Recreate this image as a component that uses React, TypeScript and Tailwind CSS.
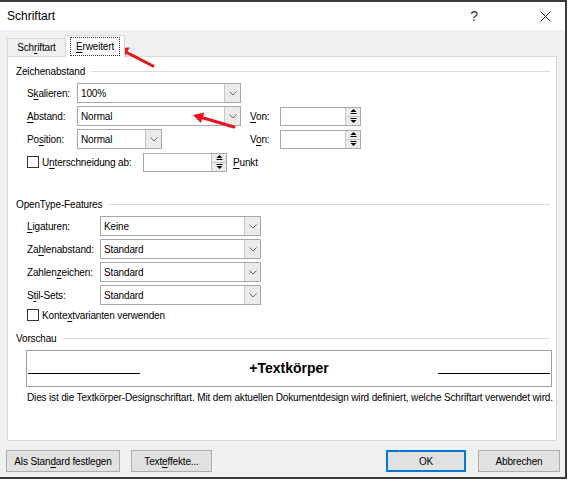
import type { ReactNode } from 'react';

// "&" marks the mnemonic letter, as in Win32 resource strings
function Mn({ t }: { t: string }) {
  const i = t.indexOf('&');
  if (i < 0) return <>{t}</>;
  return (
    <>
      {t.slice(0, i)}
      <span className="underline underline-offset-[2px]">{t[i + 1]}</span>
      {t.slice(i + 2)}
    </>
  );
}

function Chevron() {
  return (
    <svg width="8" height="5" viewBox="0 0 8 5">
      <polyline points="0.5,0.5 4,4 7.5,0.5" fill="none" stroke="#6d6d6d" strokeWidth="1" />
    </svg>
  );
}

function Combo({ w, value }: { w: string; value: string }) {
  return (
    <div className={`${w} h-[20px] flex border border-[#a8a8a8] bg-white`}>
      <div className="flex-1 flex items-center pl-[3px]">{value}</div>
      <div className="w-[16px] flex items-center justify-center bg-[#ebebeb] border-l border-[#c6c6c6]">
        <Chevron />
      </div>
    </div>
  );
}

function Spin({ w }: { w: string }) {
  return (
    <div className={`${w} h-[19px] flex border border-[#a8a8a8] bg-white`}>
      <div className="flex-1" />
      <div className="w-[15px] flex flex-col border-l border-[#c6c6c6] bg-[#ececec]">
        <div className="flex-1 flex items-center justify-center border-b border-[#c6c6c6]">
          <svg width="7" height="5" viewBox="0 0 7 5">
            <polygon points="3.5,0 6.5,3 0.5,3" fill="#000" />
            <rect x="0.5" y="4" width="6" height="1" fill="#000" />
          </svg>
        </div>
        <div className="flex-1 flex items-center justify-center">
          <svg width="7" height="5" viewBox="0 0 7 5">
            <rect x="0.5" y="0" width="6" height="1" fill="#000" />
            <polygon points="0.5,2 6.5,2 3.5,5" fill="#000" />
          </svg>
        </div>
      </div>
    </div>
  );
}

function Check() {
  return <div className="w-[12px] h-[12px] border border-[#333] bg-white shrink-0" />;
}

function Group({ title }: { title: string }) {
  return (
    <div className="h-[14px] flex items-center ml-[8px] mr-[6px]">
      <span>{title}</span>
      <div className="flex-1 h-px bg-[#dcdcdc] ml-[6px]" />
    </div>
  );
}

function Btn({ children, w, primary }: { children: ReactNode; w: string; primary?: boolean }) {
  return (
    <div
      className={`${w} h-[22px] flex items-center justify-center bg-[#e1e1e1] border ${
        primary ? 'border-[#0078d7] shadow-[inset_0_0_0_1px_#0078d7]' : 'border-[#adadad]'
      }`}
    >
      {children}
    </div>
  );
}

export default function App() {
  return (
    <div className="w-[569px] h-[480px] bg-white relative text-[10px] tracking-[-0.15px] whitespace-nowrap text-black font-['Liberation_Sans',sans-serif] overflow-hidden">
      <div className="w-[567px] h-[479px] flex flex-col border-t-2 border-r-2 border-b-2 border-[#3c3c3c] bg-[#f0f0f0]">
        {/* title bar */}
        <div className="h-[28px] bg-white flex items-center shrink-0">
          <span className="ml-[7px] text-[12px] tracking-normal">Schriftart</span>
          <span className="ml-auto text-[14px] text-[#333] mr-[62px]">?</span>
          <svg width="11" height="11" viewBox="0 0 11 11" className="mr-[14px]">
            <path d="M0.5 0.5 L10.5 10.5 M10.5 0.5 L0.5 10.5" stroke="#222" strokeWidth="1" />
          </svg>
        </div>

        {/* tabs */}
        <div className="flex items-end h-[21px] mt-[5px] ml-[7px]">
          <div className="w-[58px] h-[18px] flex items-center justify-center border-t border-l border-[#d9d9d9]">
            <Mn t="Sch&riftart" />
          </div>
          <div className="relative z-10 -mb-px w-[60px] h-[22px] flex items-center justify-center bg-white border-t border-l border-r border-[#d9d9d9]">
            <span className="px-[5px] py-[1px] border border-dotted border-[#333]">
              <Mn t="&Erweitert" />
            </span>
          </div>
        </div>

        {/* panel */}
        <div className="ml-[7px] w-[550px] h-[385px] bg-white border border-[#d9d9d9] flex flex-col pt-[7px]">
          <Group title="Zeichenabstand" />

          <div className="mt-[5px] flex flex-col gap-[3px] ml-[19px]">
            <div className="h-[20px] flex items-center">
              <span className="w-[50px]"><Mn t="S&kalieren:" /></span>
              <Combo w="w-[164px]" value="100%" />
            </div>
            <div className="h-[20px] flex items-center">
              <span className="w-[50px]"><Mn t="&Abstand:" /></span>
              <Combo w="w-[164px]" value="Normal" />
              <span className="ml-[9px] w-[30px]"><Mn t="&Von:" /></span>
              <Spin w="w-[81px]" />
            </div>
            <div className="h-[20px] flex items-center">
              <span className="w-[50px]"><Mn t="Po&sition:" /></span>
              <div className="w-[164px]">
                <Combo w="w-[85px]" value="Normal" />
              </div>
              <span className="ml-[9px] w-[30px]"><Mn t="V&on:" /></span>
              <Spin w="w-[81px]" />
            </div>
            <div className="h-[20px] flex items-center">
              <Check />
              <span className="ml-[3px] w-[101px]"><Mn t="U&nterschneidung ab:" /></span>
              <Spin w="w-[84px]" />
              <span className="ml-[6px]"><Mn t="&Punkt" /></span>
            </div>
          </div>

          <div className="mt-[25px]">
            <Group title="OpenType-Features" />
          </div>

          <div className="mt-[5px] flex flex-col gap-[3px] ml-[19px]">
            <div className="h-[20px] flex items-center">
              <span className="w-[73px]"><Mn t="&Ligaturen:" /></span>
              <Combo w="w-[161px]" value="Keine" />
            </div>
            <div className="h-[20px] flex items-center">
              <span className="w-[73px]"><Mn t="Za&hlenabstand:" /></span>
              <Combo w="w-[161px]" value="Standard" />
            </div>
            <div className="h-[20px] flex items-center">
              <span className="w-[73px]"><Mn t="Zahlen&zeichen:" /></span>
              <Combo w="w-[161px]" value="Standard" />
            </div>
            <div className="h-[20px] flex items-center">
              <span className="w-[73px]"><Mn t="S&til-Sets:" /></span>
              <Combo w="w-[161px]" value="Standard" />
            </div>
          </div>

          <div className="mt-[3px] h-[14px] flex items-center ml-[19px]">
            <Check />
            <span className="ml-[3px]"><Mn t="Konte&xtvarianten verwenden" /></span>
          </div>

          <div className="mt-[9px]">
            <Group title="Vorschau" />
          </div>

          <div className="mt-[5px] ml-[18px] w-[526px] h-[37px] border border-[#a0a0a0] flex items-center">
            <div className="w-[112px] h-px bg-black ml-[1px] mt-[10px]" />
            <span className="flex-1 text-center text-[14px] tracking-normal font-semibold">+Textkörper</span>
            <div className="w-[112px] h-px bg-black mr-[1px] mt-[10px]" />
          </div>

          <div className="mt-[3px] ml-[19px] h-[14px] flex items-center">
            Dies ist die Textkörper-Designschriftart. Mit dem aktuellen Dokumentdesign wird definiert, welche Schriftart verwendet wird.
          </div>
        </div>

        {/* buttons */}
        <div className="mt-[9px] flex items-center ml-[6px] mr-[5px]">
          <Btn w="w-[114px]"><Mn t="Als Stan&dard festlegen" /></Btn>
          <div className="ml-[11px]">
            <Btn w="w-[81px]"><Mn t="Text&effekte..." /></Btn>
          </div>
          <div className="ml-auto">
            <Btn w="w-[80px]" primary>OK</Btn>
          </div>
          <div className="ml-[12px]">
            <Btn w="w-[82px]">Abbrechen</Btn>
          </div>
        </div>
      </div>

      {/* red annotation arrows */}
      <svg className="absolute left-0 top-0 pointer-events-none" width="569" height="480">
        <line x1="153" y1="66" x2="127" y2="52.6" stroke="#e8141e" strokeWidth="3" strokeLinecap="round" />
        <polygon points="118,48 129.6,47.6 124.2,57.6" fill="#e8141e" />
        <line x1="234" y1="127" x2="202.6" y2="117.8" stroke="#e8141e" strokeWidth="3" strokeLinecap="round" />
        <polygon points="193,115 204.4,112.5 200.8,123.1" fill="#e8141e" />
      </svg>
    </div>
  );
}
